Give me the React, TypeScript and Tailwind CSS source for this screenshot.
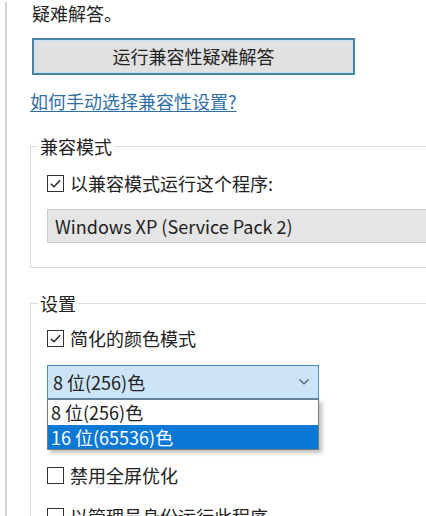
const CheckBox: React.FC<{ checked?: boolean; label: string; className?: string }> = ({
  checked,
  label,
  className,
}) => (
  <div className={`flex h-[22px] items-center ${className ?? ""}`}>
    <div className="flex h-[17px] w-[17px] items-center justify-center border border-[#333] bg-white">
      {checked ? (
        <svg width="13" height="13" viewBox="0 0 14 14">
          <path d="M2 7.2 L5.4 10.6 L12 3.4" fill="none" stroke="#222" strokeWidth="1.5" />
        </svg>
      ) : null}
    </div>
    <span className="ml-[6px] whitespace-nowrap">{label}</span>
  </div>
);

export default function App() {
  return (
    <div
      className="h-[516px] w-[426px] overflow-hidden bg-white pl-[5px] text-[18px] text-[#222]"
      style={{ fontFamily: '"Noto Sans CJK SC", "Noto Sans", sans-serif' }}
    >
      <div className="h-full border-l-2 border-[#d6d6d6] pl-[23px]">
        <div className="ml-[2px] mt-[2px] h-[22px] leading-[22px]">疑难解答。</div>

        <button
          type="button"
          className="ml-[2px] mt-[14px] flex h-[37px] w-[323px] items-center justify-center border-2 border-[#4a84a6] bg-[#e1e1e1] text-[18px] text-[#222] shadow-[inset_0_0_0_1px_#c4e1f4]"
        >
          运行兼容性疑难解答
        </button>

        <div className="mt-[15px] h-[22px] leading-[22px] text-[#2f70a6] underline underline-offset-2">
          如何手动选择兼容性设置?
        </div>

        <fieldset className="mt-[23px] w-[420px] border border-[#dcdcdc] pb-[24px]">
          <legend className="ml-[7px] px-[2px] leading-[22px]">兼容模式</legend>
          <div className="pl-[16px]">
            <CheckBox checked label="以兼容模式运行这个程序:" className="mt-[15px]" />
            <div className="mt-[15px] flex h-[34px] w-[400px] items-center border border-[#cccccc] bg-[#e5e5e5] pl-[7px]">
              Windows XP (Service Pack 2)
            </div>
          </div>
        </fieldset>

        <fieldset className="mt-[24px] w-[420px] border border-[#dcdcdc] pb-[40px]">
          <legend className="ml-[7px] px-[2px] leading-[22px]">设置</legend>
          <div className="pl-[16px]">
            <CheckBox checked label="简化的颜色模式" className="mt-[13px]" />
            <div className="relative mt-[16px] w-[272px]">
              <div className="flex h-[34px] items-center justify-between border border-[#4a8cc2] bg-[#cce4f7] pl-[5px] pr-[9px]">
                <span>8 位(256)色</span>
                <svg width="10" height="6" viewBox="0 0 10 6">
                  <path d="M0.5 0.5 L5 5 L9.5 0.5" fill="none" stroke="#555" strokeWidth="1.2" />
                </svg>
              </div>
              <div className="absolute left-0 top-[34px] z-10 w-[272px] border border-[#7a7a7a] bg-white shadow-[3px_3px_4px_rgba(0,0,0,0.25)]">
                <div className="flex h-[25px] items-center pl-[3px]">8 位(256)色</div>
                <div className="flex h-[24px] items-center bg-[#0a78d5] pl-[3px] text-white">16 位(65536)色</div>
              </div>
            </div>
            <CheckBox label="禁用全屏优化" className="mt-[65px]" />
            <CheckBox label="以管理员身份运行此程序" className="mt-[19px]" />
          </div>
        </fieldset>
      </div>
    </div>
  );
}
